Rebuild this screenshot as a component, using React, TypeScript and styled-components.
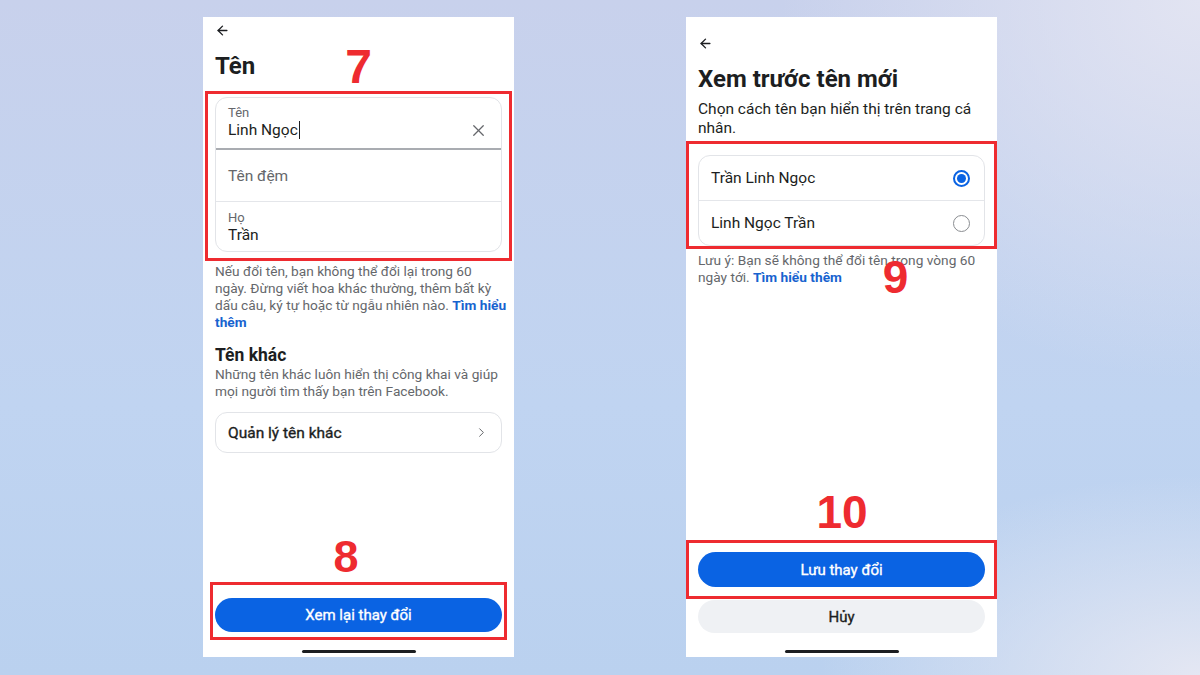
import React from 'react'
import styled, { createGlobalStyle, css } from 'styled-components'
import { ArrowLeft, X, ChevronRight } from 'lucide-react'

const GlobalStyle = createGlobalStyle`
  html, body {
    margin: 0;
    padding: 0;
  }
  body {
    font-family: Roboto, 'Noto Sans', sans-serif;
    color: #1c1e21;
  }
  * {
    box-sizing: border-box;
  }
`

// Roboto has no medium cut here, so thicken the regular one a little
const medium = css`
  font-weight: 400;
  -webkit-text-stroke: 0.35px currentColor;
`

const Stage = styled.div`
  width: 1200px;
  height: 675px;
  overflow: hidden;
  display: flex;
  justify-content: center;
  align-items: flex-start;
  gap: 172px;
  padding-top: 17px;
  background:
    radial-gradient(ellipse 420px 380px at 100% 0%, #e2e4f2 0%, rgba(226, 228, 242, 0) 100%),
    radial-gradient(ellipse 380px 200px at 100% 100%, #e4e7f3 0%, rgba(228, 231, 243, 0) 100%),
    linear-gradient(180deg, #c8d1ec 0%, #c0d4f1 60%, #bad1ef 100%);
`

const Phone = styled.div<{ $top?: number }>`
  position: relative;
  width: 311px;
  height: 640px;
  background: #ffffff;
  display: flex;
  flex-direction: column;
  padding: ${(p) => p.$top ?? 0}px 12px 4px;
`

const TopBar = styled.div`
  height: 26px;
  display: flex;
  align-items: center;
  color: #1c1e21;
`

const Title = styled.h1<{ $mt: number }>`
  margin: ${(p) => p.$mt}px 0 0;
  font-size: 24px;
  line-height: 28px;
  font-weight: 700;
  color: #1c1e21;
`

const Lead = styled.p`
  margin: 7px 0 0;
  font-size: 15.5px;
  line-height: 19px;
  color: #1c1e21;
`

const Highlight = styled.div<{ $mx: number; $px: number; $pt: number; $pb: number; $mt?: number }>`
  margin: ${(p) => p.$mt ?? 0}px ${(p) => -p.$mx}px 0;
  padding: ${(p) => p.$pt}px ${(p) => p.$px}px ${(p) => p.$pb}px;
  border: 3px solid #ee2b30;
`

const Card = styled.div`
  border: 1px solid #e2e4e8;
  border-radius: 12px;
  overflow: hidden;
  background: #fff;
`

const FieldRow = styled.div<{ $h: number; $divider?: 'strong' | 'light'; $align?: 'top' | 'center'; $pt?: number }>`
  height: ${(p) => p.$h}px;
  padding: ${(p) => p.$pt ?? 0}px 13px 0 12px;
  display: flex;
  align-items: ${(p) => (p.$align === 'top' ? 'flex-start' : 'center')};
  justify-content: space-between;
  border-bottom: ${(p) =>
    p.$divider === 'strong' ? '2px solid #a9acb1' : p.$divider === 'light' ? '1px solid #e4e6ea' : 'none'};
`

const FieldText = styled.div`
  display: flex;
  flex-direction: column;
`

const FieldLabel = styled.span`
  font-size: 13px;
  line-height: 16px;
  color: #65676b;
`

const FieldValue = styled.span`
  font-size: 15.5px;
  line-height: 18px;
  color: #1c1e21;
  display: flex;
  align-items: center;
`

const Placeholder = styled.span`
  font-size: 15.5px;
  color: #65676b;
`

const Caret = styled.span`
  display: inline-block;
  width: 1.5px;
  height: 18px;
  margin-left: 1px;
  background: #1c1e21;
`

const ClearIcon = styled.div`
  color: #65676b;
  display: flex;
  margin-top: 16px;
`

const Help = styled.p<{ $mt: number; $lines?: boolean }>`
  margin: ${(p) => p.$mt}px 0 0;
  font-size: 13.7px;
  line-height: 17px;
  color: #65676b;
  white-space: ${(p) => (p.$lines ? 'nowrap' : 'normal')};
`

const Link = styled.span`
  color: #1763cf;
  font-weight: 700;
`

const SectionTitle = styled.h2`
  margin: 13px 0 0;
  font-size: 17.5px;
  line-height: 22px;
  font-weight: 700;
  color: #1c1e21;
`

const LinkCard = styled.div`
  margin-top: 12px;
  height: 41px;
  border: 1px solid #e2e4e8;
  border-radius: 12px;
  padding: 0 12px;
  display: flex;
  align-items: center;
  justify-content: space-between;
  font-size: 15.5px;
  color: #1c1e21;
`

const LinkLabel = styled.span`
  ${medium}
`

const Chevron = styled.div`
  display: flex;
  color: #65676b;
`

const Spacer = styled.div`
  flex: 1;
`

const PrimaryButton = styled.div<{ $h: number }>`
  height: ${(p) => p.$h}px;
  border-radius: 999px;
  background: #0a63e3;
  color: #ffffff;
  font-size: 15px;
  ${medium}
  display: flex;
  align-items: center;
  justify-content: center;
`

const SecondaryButton = styled.div`
  margin-top: 1px;
  height: 33px;
  border-radius: 999px;
  background: #eff1f4;
  color: #1c1e21;
  font-size: 15px;
  ${medium}
  display: flex;
  align-items: center;
  justify-content: center;
`

const HomeIndicator = styled.div<{ $mt: number }>`
  margin: ${(p) => p.$mt}px auto 0;
  width: 114px;
  height: 3px;
  border-radius: 2px;
  background: #1c1e21;
`

const OptionRow = styled.div<{ $h: number; $divider?: boolean }>`
  height: ${(p) => p.$h}px;
  padding: 0 14px 0 12px;
  display: flex;
  align-items: center;
  justify-content: space-between;
  font-size: 15.5px;
  color: #1c1e21;
  border-bottom: ${(p) => (p.$divider ? '1px solid #e4e6ea' : 'none')};
`

const Radio = styled.span<{ $checked?: boolean }>`
  width: 17px;
  height: 17px;
  border-radius: 50%;
  border: ${(p) => (p.$checked ? '2px solid #0a63e3' : '1.5px solid #8a8d91')};
  display: flex;
  align-items: center;
  justify-content: center;
  &::after {
    content: '';
    width: 9px;
    height: 9px;
    border-radius: 50%;
    background: ${(p) => (p.$checked ? '#0a63e3' : 'transparent')};
  }
`

const StepNumber = styled.span<{ $x: number; $y: number; $size: number }>`
  position: absolute;
  left: ${(p) => p.$x}px;
  top: ${(p) => p.$y}px;
  transform: translateX(-50%);
  font-family: 'Liberation Sans', Arial, sans-serif;
  font-weight: 700;
  font-size: ${(p) => p.$size}px;
  line-height: 1;
  color: #ee2b30;
  pointer-events: none;
`

function NameScreen() {
  return (
    <Phone>
      <TopBar>
        <ArrowLeft size={15} strokeWidth={2.2} />
      </TopBar>
      <Title $mt={9}>Tên</Title>

      <Highlight $mt={11} $mx={10} $px={7} $pt={3} $pb={6}>
        <Card>
          <FieldRow $h={52} $divider="strong" $align="top" $pt={7}>
            <FieldText>
              <FieldLabel>Tên</FieldLabel>
              <FieldValue>
                Linh Ngọc
                <Caret />
              </FieldValue>
            </FieldText>
            <ClearIcon>
              <X size={19} strokeWidth={1.6} />
            </ClearIcon>
          </FieldRow>
          <FieldRow $h={52} $divider="light">
            <Placeholder>Tên đệm</Placeholder>
          </FieldRow>
          <FieldRow $h={49} $align="top" $pt={8}>
            <FieldText>
              <FieldLabel>Họ</FieldLabel>
              <FieldValue>Trần</FieldValue>
            </FieldText>
          </FieldRow>
        </Card>
      </Highlight>

      <Help $mt={2} $lines>
        Nếu đổi tên, bạn không thể đổi lại trong 60
        <br />
        ngày. Đừng viết hoa khác thường, thêm bất kỳ
        <br />
        dấu câu, ký tự hoặc từ ngẫu nhiên nào. <Link>Tìm hiểu</Link>
        <br />
        <Link>thêm</Link>
      </Help>

      <SectionTitle>Tên khác</SectionTitle>
      <Help $mt={0}>Những tên khác luôn hiển thị công khai và giúp mọi người tìm thấy bạn trên Facebook.</Help>

      <LinkCard>
        <LinkLabel>Quản lý tên khác</LinkLabel>
        <Chevron>
          <ChevronRight size={15} strokeWidth={1.6} />
        </Chevron>
      </LinkCard>

      <Spacer />

      <Highlight $mx={5} $px={2} $pt={13} $pb={5}>
        <PrimaryButton $h={34}>Xem lại thay đổi</PrimaryButton>
      </Highlight>
      <HomeIndicator $mt={10} />

      <StepNumber $x={155.5} $y={26} $size={48}>
        7
      </StepNumber>
      <StepNumber $x={143} $y={517} $size={45}>
        8
      </StepNumber>
    </Phone>
  )
}

function PreviewScreen() {
  return (
    <Phone $top={13}>
      <TopBar>
        <ArrowLeft size={15} strokeWidth={2.2} />
      </TopBar>
      <Title $mt={9}>Xem trước tên mới</Title>
      <Lead>Chọn cách tên bạn hiển thị trên trang cá nhân.</Lead>

      <Highlight $mt={3} $mx={12} $px={9} $pt={11} $pb={0}>
        <Card>
          <OptionRow $h={45} $divider>
            Trần Linh Ngọc
            <Radio $checked />
          </OptionRow>
          <OptionRow $h={44}>
            Linh Ngọc Trần
            <Radio />
          </OptionRow>
        </Card>
      </Highlight>

      <Help $mt={3}>
        Lưu ý: Bạn sẽ không thể đổi tên trong vòng 60 ngày tới. <Link>Tìm hiểu thêm</Link>
      </Help>

      <Spacer />

      <Highlight $mx={12} $px={9} $pt={9} $pb={9}>
        <PrimaryButton $h={35}>Lưu thay đổi</PrimaryButton>
      </Highlight>
      <SecondaryButton>Hủy</SecondaryButton>
      <HomeIndicator $mt={17} />

      <StepNumber $x={209.5} $y={237} $size={46}>
        9
      </StepNumber>
      <StepNumber $x={156} $y={472} $size={46}>
        10
      </StepNumber>
    </Phone>
  )
}

export default function App() {
  return (
    <>
      <GlobalStyle />
      <Stage>
        <NameScreen />
        <PreviewScreen />
      </Stage>
    </>
  )
}
